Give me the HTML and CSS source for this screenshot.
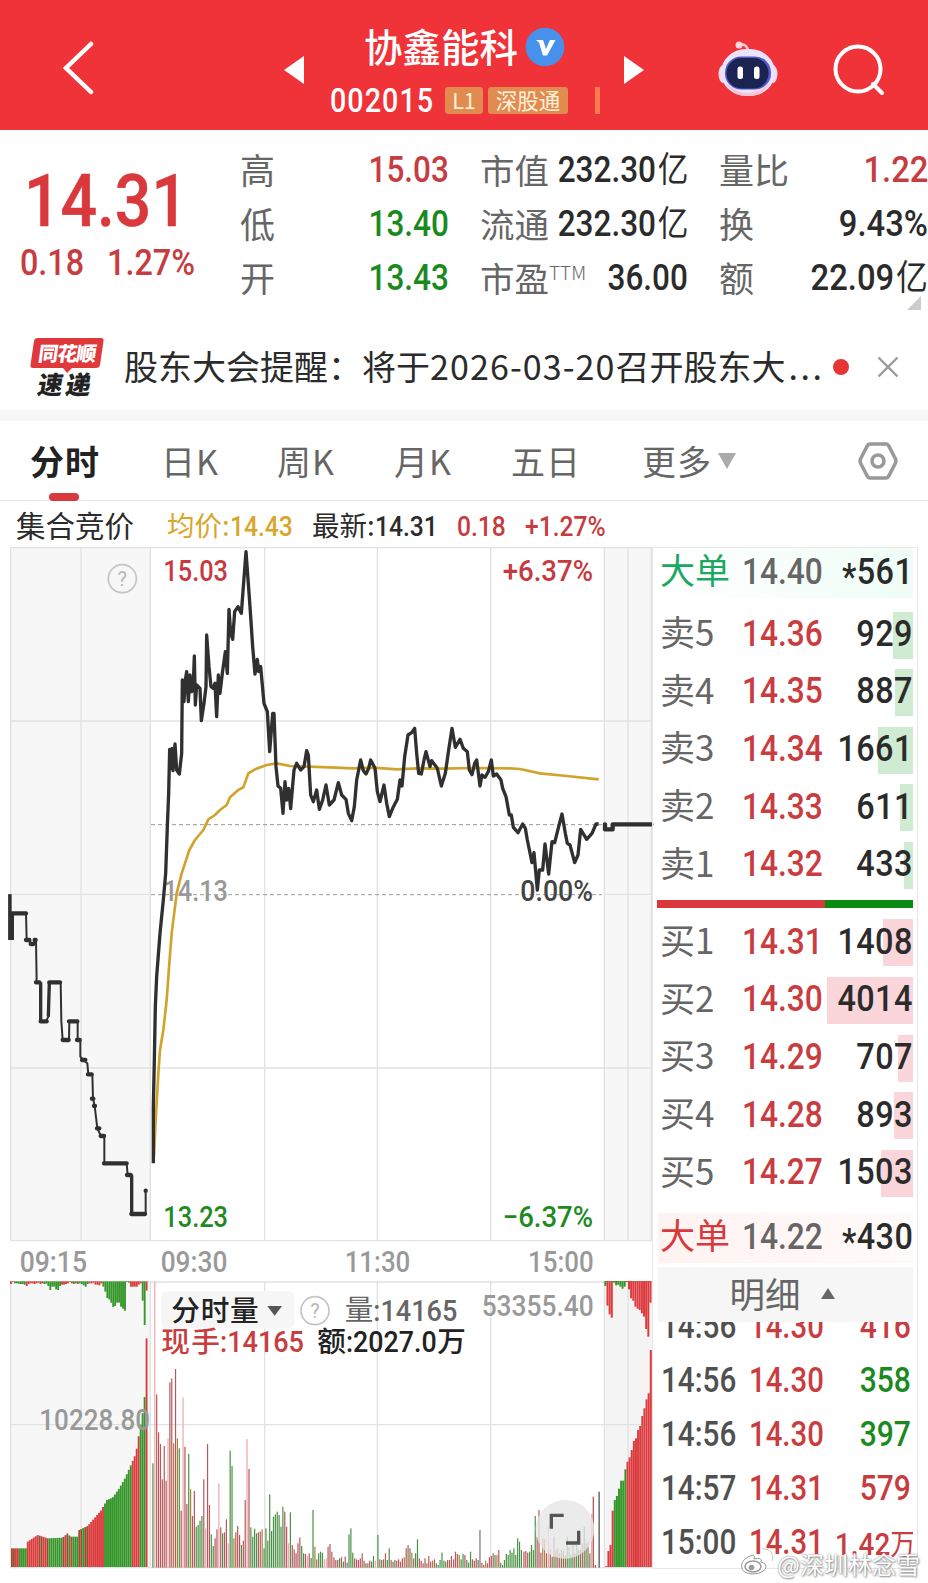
FILE: index.html
```html
<!DOCTYPE html>
<html lang="zh-CN">
<head>
  <meta charset="UTF-8">
  <meta name="viewport" content="width=device-width, initial-scale=1.0">
  <title>协鑫能科 002015</title>
  <link rel="stylesheet" href="styles.css">
</head>
<body>
  <header>
    <svg class="back" width="32" height="54" viewBox="0 0 32 54"><path d="M29 3 L4 27 L29 51"/></svg>
    <svg class="prev" width="20" height="28" viewBox="0 0 20 28"><path d="M20 0 V28 L0 14 Z"/></svg>
    <div class="stock">
      <div class="name">协鑫能科
        <svg width="40" height="40" viewBox="0 0 40 40"><circle cx="20" cy="20" r="19.3" fill="#4791ea"/><path d="M11 13 H18 L21 22 L25 13 H30.500 L22 28.500 H18 L14 15.500 Z" fill="#fff"/></svg>
      </div>
      <div class="code">
        <span class="code-num">002015</span>
        <span class="tag tag-l1">L1</span>
        <span class="tag">深股通</span>
        <span class="sliver"></span>
      </div>
    </div>
    <svg class="next" width="20" height="28" viewBox="0 0 20 28"><path d="M0 0 V28 L20 14 Z"/></svg>
    <svg class="robot" width="60" height="58" viewBox="0 0 60 58">
      <path d="M21 5 Q29 3 30 11" fill="none" stroke="#ffc9d3" stroke-width="2.500"/>
      <circle cx="21" cy="5" r="3.500" fill="#ffd9df"/>
      <ellipse cx="5" cy="34" rx="4.500" ry="9" fill="#f6d9ec"/>
      <ellipse cx="55" cy="34" rx="4.500" ry="9" fill="#f6d9ec"/>
      <rect x="3" y="9" width="54" height="47" rx="25" fill="#e9e4fb"/>
      <path d="M8 43 Q29 63 52 43 Q45 56 30 56 Q15 56 8 43" fill="#fbc4d6"/>
      <rect x="7" y="16.500" width="46" height="33" rx="16" fill="#5557c9"/>
      <rect x="8.500" y="18" width="42" height="30.500" rx="15" fill="#1b2450"/>
      <rect x="19.500" y="26.500" width="5.500" height="12.500" rx="2.500" fill="#fff"/>
      <rect x="36" y="26.500" width="5.500" height="12.500" rx="2.500" fill="#fff"/>
    </svg>
    <svg class="search" width="52" height="52" viewBox="0 0 52 52"><circle cx="25" cy="25" r="22.500"/><path d="M40 40 L49 49"/></svg>
  </header>

  <section class="quote">
    <div class="last">
      <div class="last-price">14.31</div>
      <div class="last-change"><span>0.18</span><span>1.27%</span></div>
    </div>
    <div class="stats">
      <div class="stat s1"><span>高</span><b class="red">15.03</b></div>
      <div class="stat s2"><span>市值</span><b>232.30<i>亿</i></b></div>
      <div class="stat s3"><span>量比</span><b class="red">1.22</b></div>
      <div class="stat s1"><span>低</span><b class="green">13.40</b></div>
      <div class="stat s2"><span>流通</span><b>232.30<i>亿</i></b></div>
      <div class="stat s3"><span>换</span><b>9.43%</b></div>
      <div class="stat s1"><span>开</span><b class="green">13.43</b></div>
      <div class="stat s2"><span>市盈<sup>TTM</sup></span><b>36.00</b></div>
      <div class="stat s3"><span>额</span><b>22.09<i>亿</i></b></div>
    </div>
    <div class="corner"></div>
  </section>

  <section class="news">
    <svg class="news-logo" width="74" height="62" viewBox="0 0 74 62">
      <path d="M8 1 H71 Q74 1 73.500 4 L70 28 Q69.500 31 66 31 H42 L37 36 L33 31 H3 Q0 31 .5 28 L4 4 Q4.500 1 8 1 Z" fill="#e0393c"/>
      <text x="37" y="24" text-anchor="middle" fill="#fff" font-size="20" textLength="58" transform="skewX(-8) translate(3 0)">同花顺</text>
      <text x="37" y="57" text-anchor="middle" fill="#222" font-size="25" textLength="53" transform="skewX(-10) translate(6 0)">速递</text>
    </svg>
    <div class="news-text">股东大会提醒：<span>将于</span><em>2026-03-20</em>召开股东大<span class="dots">...</span></div>
    <div class="dot"></div>
    <svg class="close" width="22" height="22" viewBox="0 0 22 22"><path d="M1.500 1.500 L20.500 20.500 M20.500 1.500 L1.500 20.500"/></svg>
  </section>

  <nav>
    <div class="tab active">分时</div>
    <div class="tab">日K</div>
    <div class="tab">周K</div>
    <div class="tab">月K</div>
    <div class="tab">五日</div>
    <div class="tab more">更多<svg width="18" height="16" viewBox="0 0 18 16"><path d="M0 0 H18 L9 16 Z" fill="#aaa"/></svg></div>
    <svg class="gear" width="40" height="38" viewBox="0 0 40 38"><path d="M12 2 H28 Q29.500 2 30.500 3.500 L37.500 17 Q38.300 19 37.500 21 L30.500 34.500 Q29.500 36 28 36 H12 Q10.500 36 9.500 34.500 L2.500 21 Q1.700 19 2.500 17 L9.500 3.500 Q10.500 2 12 2 Z"/><circle cx="20" cy="19" r="6"/></svg>
  </nav>

  <div class="info">
    <span class="auction">集合竞价</span>
    <span class="avg">均价:<b>14.43</b></span>
    <span class="new">最新:<b>14.31</b></span>
    <span class="red"><b>0.18</b></span>
    <span class="red"><b>+1.27%</b></span>
  </div>

  <main>
    <div class="charts">
      <svg class="price" width="652" height="728" viewBox="0 21 1956 2184">
        <rect x="31" y="22" width="420" height="2081" fill="#f7f7f7"/>
        <rect x="1813" y="22" width="143" height="2081" fill="#f7f7f7"/>
        <path class="grid" d="M31 23 H1956 M31 543 H1956 M31 1063 H451 M1813 1063 H1956 M31 1584 H1956 M31 2102 H1956
          M32 22 V2103 M243 22 V2103 M451 22 V2103 M794 22 V2103 M1132 22 V2103 M1472 22 V2103 M1813 22 V2103 M1884 22 V2103 M1954 22 V2103"/>
        <path class="dash" d="M453 854 H1806 M453 1064 H1806"/>
        <circle cx="367" cy="116" r="42" fill="none" stroke="#c4c4c4" stroke-width="5"/>
        <text x="367" y="138" text-anchor="middle" font-size="60" fill="#b8b8b8">?</text>
        <text x="490" y="1083" textLength="194" lengthAdjust="spacingAndGlyphs" fill="#999">14.13</text>
        <text x="1561" y="1083" textLength="218" lengthAdjust="spacingAndGlyphs" fill="#444">0.00%</text>
        <polyline class="avg-line" points="462,1850 466,1760 475,1600 480,1530 490,1470 500,1380 508,1270 515,1180 530,1060 545,1000 555,970 568,930 585,900 610,870 625,838 645,825 660,810 680,795 690,772 715,750 730,742 745,700 765,688 800,675 830,670 870,678 990,682 1060,685 1120,683 1190,688 1250,685 1330,686 1410,684 1530,685 1560,687 1620,700 1700,708 1796,718"/>
        <polyline class="line" points="460,1870 460,1700 463,1560 466,1400 470,1310 480,1180 490,1080 497,1000 502,860 506,760 509,628 514,685 516,625 519,692 525,612 530,690 538,702 545,640 547,420 552,485 556,420 560,395 565,485 570,405 575,455 580,430 583,348 586,495 590,435 600,445 604,542 612,490 618,440 620,285 627,380 633,440 640,445 645,430 650,530 655,405 660,460 667,400 676,335 682,400 687,208 692,280 698,298 704,215 714,200 724,220 738,35 750,200 758,320 765,402 772,358 776,395 782,380 792,490 802,515 809,635 818,520 822,520 828,680 834,738 842,745 849,820 855,725 860,780 866,745 872,806 882,690 890,670 902,690 912,680 920,632 925,645 932,765 940,785 950,750 958,808 968,780 978,735 988,795 1002,780 1015,728 1025,765 1038,778 1045,820 1055,842 1063,800 1070,720 1082,660 1090,692 1098,702 1106,685 1112,660 1125,685 1132,755 1140,785 1152,735 1160,790 1168,830 1178,805 1192,778 1200,720 1206,738 1214,650 1224,585 1235,578 1244,565 1250,640 1256,700 1264,702 1272,660 1278,635 1290,680 1295,662 1312,685 1324,738 1336,700 1346,630 1356,565 1366,622 1380,598 1390,625 1402,635 1408,690 1416,704 1424,670 1430,660 1440,738 1446,705 1455,712 1465,695 1474,660 1480,708 1490,702 1503,720 1508,745 1518,770 1528,825 1534,825 1540,862 1554,878 1568,852 1576,865 1582,900 1596,968 1602,938 1612,1050 1618,990 1628,990 1635,912 1646,1002 1656,905 1664,908 1676,860 1686,822 1696,880 1702,910 1710,915 1724,968 1734,945 1742,868 1760,898 1776,880 1788,852 1796,852"/>
        <path class="step" d="M1815 853 V868 H1838 V853 H1954"/>
        <g transform="translate(0 1020)">
          <path class="thin" d="M28 43 V180 M36 180 V100 H78 L80 180 H90 L92 192 H100 L108 180 L110 307 H120 L122 424 H138 L145 410 L148 307 H182 L184 424 L188 480 H207 L208 424 H233 V480 H241 V530 L250 540 L262 550 L265 583 H277 L279 656 L284 678 L292 745 L303 768 H313 V850 H380 L383 885 H394 L395 1002 H437 V932"/>
          <path class="step" d="M36 100 H78 M78 180 H88 M92 192 H100 M104 180 H107 M108 307 H118 M122 424 H140 M148 307 H180 M188 480 H206 M207 424 H232 M231 480 H239 M246 540 H256 M264 583 H275 M276 656 H280 M282 678 H285 M291 745 H298 M302 768 H312 M312 850 H380 M381 885 H392 M394 1002 H435 M437 932 H437.100"/>
          <path class="line" d="M30 43 V180 M37 100 V180 M122 307 V424 M148 307 L145 410 M395 885 V1002"/>
        </g>
        <g>
          <text x="490" y="124" textLength="194" lengthAdjust="spacingAndGlyphs" fill="#c63a3f">15.03</text>
          <text x="1508" y="124" textLength="271" lengthAdjust="spacingAndGlyphs" fill="#c63a3f">+6.37%</text>
          <text x="490" y="2060" textLength="194" lengthAdjust="spacingAndGlyphs" fill="#1f8a24">13.23</text>
          <text x="1508" y="2060" textLength="271" lengthAdjust="spacingAndGlyphs" fill="#1f8a24">−6.37%</text>
        </g>
        <g fill="#999">
          <text x="59" y="2196" textLength="202" lengthAdjust="spacingAndGlyphs">09:15</text>
          <text x="482" y="2196" textLength="200" lengthAdjust="spacingAndGlyphs">09:30</text>
          <text x="1034" y="2196" textLength="197" lengthAdjust="spacingAndGlyphs">11:30</text>
          <text x="1584" y="2196" textLength="197" lengthAdjust="spacingAndGlyphs">15:00</text>
        </g>
      </svg>

      <svg class="volume" width="652" height="300" viewBox="0 15 1956 900">
        <rect x="31" y="33" width="420" height="860" fill="#f7f7f7"/>
        <rect x="1813" y="33" width="143" height="860" fill="#f4f4f4"/>
        <path class="grid" d="M31 36 H1956 M31 464 H1956 M31 893 H1956 M32 33 V893 M243 33 V893 M451 33 V893 M794 33 V893 M1132 33 V893 M1472 33 V893 M1813 33 V893 M1884 33 V893"/>
        <g id="bars"></g>
        <rect x="483" y="63" width="400" height="112" rx="18" fill="#f6f6f6"/>
        <text class="cn mid" x="514" y="154" textLength="262" fill="#222">分时量</text>
        <path d="M802 108 H846 L824 137 Z" fill="#555"/>
        <circle cx="945" cy="122" r="42" fill="none" stroke="#c4c4c4" stroke-width="5"/>
        <text x="945" y="144" text-anchor="middle" font-size="60" fill="#b8b8b8">?</text>
        <text class="cn" x="1034" y="150" fill="#666">量</text>
        <text x="1120" y="152" textLength="252" lengthAdjust="spacingAndGlyphs" fill="#666">:14165</text>
        <text x="1445" y="137" textLength="336" lengthAdjust="spacingAndGlyphs" fill="#999">53355.40</text>
        <g class="bold">
          <text class="cn" x="484" y="247" textLength="176" fill="#c93c40">现手</text>
          <text x="660" y="247" textLength="252" lengthAdjust="spacingAndGlyphs" fill="#c93c40">:14165</text>
          <text class="cn" x="952" y="247" fill="#222">额</text>
          <text x="1038" y="247" textLength="272" lengthAdjust="spacingAndGlyphs" fill="#222">:2027.0</text>
          <text class="cn" x="1312" y="247" fill="#222">万</text>
        </g>
        <text x="118" y="481" textLength="332" lengthAdjust="spacingAndGlyphs" fill="#999">10228.80</text>
        <circle cx="1695" cy="778" r="88" fill="#e6e6e6" fill-opacity=".8"/>
        <path d="M1654 776 V736 H1691 M1736 782 V819 H1698" fill="none" stroke="#555" stroke-width="10"/>
      </svg>
    </div>

    <aside>
      <div class="row big sell-big"><span>大单</span><b>14.40</b><em><u>*</u>561</em></div>
      <div class="row sell"><span>卖5</span><b>14.36</b><em>929</em><i style="width:20px"></i></div>
      <div class="row sell"><span>卖4</span><b>14.35</b><em>887</em><i style="width:18px"></i></div>
      <div class="row sell"><span>卖3</span><b>14.34</b><em>1661</em><i style="width:35px"></i></div>
      <div class="row sell"><span>卖2</span><b>14.33</b><em>611</em><i style="width:13px"></i></div>
      <div class="row sell"><span>卖1</span><b>14.32</b><em>433</em><i style="width:9px"></i></div>
      <div class="ratio"></div>
      <div class="row buy"><span>买1</span><b>14.31</b><em>1408</em><i style="width:30px"></i></div>
      <div class="row buy"><span>买2</span><b>14.30</b><em>4014</em><i style="width:86px"></i></div>
      <div class="row buy"><span>买3</span><b>14.29</b><em>707</em><i style="width:15px"></i></div>
      <div class="row buy"><span>买4</span><b>14.28</b><em>893</em><i style="width:19px"></i></div>
      <div class="row buy"><span>买5</span><b>14.27</b><em>1503</em><i style="width:32px"></i></div>
      <div class="row big buy-big"><span>大单</span><b>14.22</b><em><u>*</u>430</em></div>
      <div class="detail">明细<svg width="14" height="11" viewBox="0 0 14 11"><path d="M0 11 H14 L7 0 Z" fill="#666"/></svg></div>
      <div class="ticks">
        <div class="tick"><span>14:56</span><b>14.30</b><em class="red">416</em></div>
        <div class="tick"><span>14:56</span><b>14.30</b><em class="green">358</em></div>
        <div class="tick"><span>14:56</span><b>14.30</b><em class="green">397</em></div>
        <div class="tick"><span>14:57</span><b>14.31</b><em class="red">579</em></div>
        <div class="tick"><span>15:00</span><b>14.31</b><em class="red wan">1.42<i>万</i></em></div>
      </div>
    </aside>
  </main>

  <div class="watermark">
    <svg width="34" height="28" viewBox="0 0 34 28">
      <path d="M13 7 Q2 10 1.500 18 Q2 26 13 26 Q26 25 26 18 Q25 14 21 14 Q23 9 14 11 Q15 7 13 7 Z" fill="#fff" stroke="#999" stroke-width="1"/>
      <ellipse cx="13" cy="18.500" rx="8" ry="5.500" fill="none" stroke="#999" stroke-width="1.500"/>
      <circle cx="11.500" cy="19.500" r="2.800" fill="#999"/>
      <path d="M22 2 Q33 2 31 13 M22 7 Q27 7 26.500 12" fill="none" stroke="#fff" stroke-width="2.500"/>
      <path d="M22 .7 Q34.500 1 32.500 13" fill="none" stroke="#bbb" stroke-width=".8"/>
    </svg>
    <span>@深圳林念雪</span>
  </div>

  <script src="chart.js"></script>
</body>
</html>
```

FILE: styles.css
```css
* {
  box-sizing: border-box;
}

body {
  margin: 0;
  position: relative;
  width: 928px;
  height: 1583px;
  overflow: hidden;
  background: #fff;
  color: #2b2b2b;
  font-family: Roboto, "Noto Sans CJK SC", sans-serif;
}

b, em, i {
  font-style: normal;
  font-weight: 500;
}

.red { color: #c63c40; }
.green { color: #1a8a1e; }

/* top bar */
header {
  display: flex;
  align-items: flex-start;
  height: 129.500px;
  background: #f03239;
}

header svg { flex: none; }

.back {
  margin: 41px 0 0 62px;
  fill: none;
  stroke: #fff;
  stroke-width: 4.5;
  stroke-linecap: round;
}

.prev, .next {
  margin-top: 56px;
  fill: #fff;
}

.prev { margin-left: 190px; }
.next { margin-left: 22px; }

.stock {
  width: 298px;
  padding: 19px 0 0 26px;
}

.name {
  display: flex;
  align-items: center;
  height: 52px;
  padding-left: 34px;
  font-family: "Noto Sans CJK SC", sans-serif;
  font-size: 38.5px;
  font-weight: 500;
  color: #fff;
  white-space: nowrap;
}

.name svg { margin: 4px 0 0 7px; }

.code {
  display: flex;
  align-items: center;
  height: 27px;
  margin-top: 16px;
  color: #fff;
}

.code-num {
  width: 115px;
  font-size: 33px;
  font-weight: 500;
  letter-spacing: 1.2px;
  transform: scaleX(.87);
  transform-origin: left;
}

.tag {
  height: 27px;
  line-height: 25px;
  width: 80px;
  margin-right: 27px;
  border-radius: 3px;
  background: #e28b50;
  font-family: "Noto Sans CJK SC", sans-serif;
  font-size: 21.5px;
  color: #fff2dc;
  text-align: center;
  white-space: nowrap;
  flex: none;
}

.tag-l1 {
  width: 38px;
  margin-right: 5px;
}

.sliver {
  width: 5px;
  height: 27px;
  background: #ff7a50;
  flex: none;
}

.robot { margin: 40px 0 0 74px; }

.search {
  margin: 44px 0 0 55px;
  fill: none;
  stroke: #fff;
  stroke-width: 4;
  stroke-linecap: round;
}

/* quote block */
.quote {
  position: relative;
  display: flex;
  height: 195.500px;
}

.last {
  width: 240px;
  padding: 28px 0 0 24px;
  color: #d9383c;
}

.last-price {
  font-size: 73px;
  line-height: 86px;
  font-weight: 500;
  -webkit-text-stroke: .6px;
  transform: scaleX(.88);
  transform-origin: left;
}

.last-change {
  display: flex;
  gap: 26px;
  margin: -1px 0 0 -4px;
  font-size: 36.5px;
  line-height: 40px;
  font-weight: 500;
  color: #c63c40;
  transform: scaleX(.885);
  transform-origin: left;
}

.stats {
  display: grid;
  grid-template-columns: 210px 238px 240px;
  grid-auto-rows: 54px;
  padding-top: 12px;
}

.stat {
  display: flex;
  justify-content: space-between;
  align-items: center;
  white-space: nowrap;
}

.s1 { padding-right: 1px; }
.s2 { padding-left: 30px; }
.s3 { padding-left: 31px; }

.stat span {
  font-family: "Noto Sans CJK SC", sans-serif;
  font-size: 35px;
  line-height: 50px;
  color: #666;
}

.s2 span { font-size: 34.5px; }

.stat sup {
  font-size: 19px;
  line-height: 0;
  vertical-align: 12px;
  font-weight: 300;
}

.stat b {
  font-size: 36px;
  line-height: 50px;
  padding-top: 3px;
  transform: scaleX(.875);
  transform-origin: right;
}

.s2 b { margin-left: -40px; }
.s3 b { transform: scaleX(.91); }

.stat b i {
  display: inline-block;
  margin-left: 2px;
  font-size: 35px;
  line-height: 40px;
  font-weight: 400;
}

.corner {
  position: absolute;
  right: 7px;
  bottom: 15px;
  border-left: 14px solid transparent;
  border-bottom: 14px solid #ccc;
}

/* news */
.news {
  display: flex;
  align-items: center;
  height: 96px;
  padding: 0 29px 0 30px;
  border-bottom: 11px solid #f7f7f7;
}

.news-logo {
  flex: none;
  overflow: visible;
  font-family: "Noto Sans CJK SC", sans-serif;
  font-weight: 900;
}

.news-text {
  width: 703px;
  margin: -4px 0 0 20px;
  font-family: "Noto Sans CJK SC", sans-serif;
  font-size: 34px;
  white-space: nowrap;
}

.news-text em {
  font-weight: 400;
  letter-spacing: 1.1px;
}

.dots {
  margin-left: 3px;
  letter-spacing: 2.500px;
}

.dot {
  width: 16px;
  height: 16px;
  margin: -2px 0 0 8px;
  border-radius: 50%;
  background: #e63333;
  flex: none;
}

.close {
  margin: -1px 0 0 28px;
  flex: none;
  stroke: #999;
  stroke-width: 2.4;
}

/* period tabs */
nav {
  display: flex;
  align-items: center;
  height: 80px;
  padding: 0 30px 0 30px;
  border-bottom: 1px solid #e6e6e6;
  font-family: "Noto Sans CJK SC", sans-serif;
  font-size: 34px;
  color: #666;
}

.tab {
  position: relative;
  flex: none;
  width: 116px;
  line-height: 50px;
  letter-spacing: 1px;
}

.tab.active {
  width: 131px;
  font-weight: 700;
  color: #222;
}

.tab.active::after {
  content: "";
  position: absolute;
  left: 19px;
  bottom: -15px;
  width: 30px;
  height: 8px;
  border-radius: 4px;
  background: #d9383c;
}

.tab:nth-child(3) { width: 117px; }
.tab:nth-child(4) { width: 117px; }
.tab:nth-child(5) { width: 131px; }

.more { width: 140px; }
.more svg { margin: 0 0 6px 6px; }

.gear {
  margin: 0 0 0 auto;
  fill: none;
  stroke: #999;
  stroke-width: 3.5;
}

/* line above the chart */
.info {
  display: flex;
  align-items: center;
  height: 46px;
  padding: 0 0 1px 16px;
  font-family: "Noto Sans CJK SC", sans-serif;
  font-size: 27.5px;
  white-space: nowrap;
}

.info b {
  display: inline-block;
  font-family: Roboto, sans-serif;
  font-size: 28px;
  transform: scaleX(.88);
  transform-origin: left;
}

.info .auction {
  width: 151px;
  font-size: 29.5px;
}

.info .avg {
  width: 145px;
  color: #d9a52a;
}

.info .new { width: 145px; }
.info .red { width: 68px; }

/* charts */
main {
  display: flex;
}

.charts { width: 652px; }

.charts svg {
  display: block;
  overflow: visible;
}

.charts text {
  font-family: Roboto, sans-serif;
  font-size: 86px;
  font-weight: 500;
}

.charts text[font-size="60"] {
  font-size: 60px;
  font-weight: 400;
}

.charts .cn {
  font-family: "Noto Sans CJK SC", sans-serif;
  font-weight: 400;
}

.charts .mid,
.charts .bold .cn { font-weight: 500; }

.grid {
  fill: none;
  stroke: #e2e2e2;
  stroke-width: 4;
}

.dash {
  fill: none;
  stroke: #999;
  stroke-width: 3;
  stroke-dasharray: 12 9;
}

.line, .thin, .step, .avg-line {
  fill: none;
  stroke: #303030;
  stroke-width: 10;
  stroke-linejoin: round;
}

.thin { stroke-width: 6; }

.step {
  stroke-width: 13;
  stroke-linecap: round;
}

.avg-line {
  stroke: #d0a32c;
  stroke-width: 8;
}

/* order book */
aside {
  width: 266px;
  height: 1022px;
  padding: 0 4px 0 5px;
  border: 1px solid #e8e8e8;
}

.row {
  position: relative;
  display: flex;
  align-items: center;
  height: 57.6px;
  padding: 0 0 3px 2px;
  white-space: nowrap;
}

.row span {
  flex: none;
  width: 82px;
  margin-top: -5px;
  font-family: "Noto Sans CJK SC", sans-serif;
  font-size: 35px;
  line-height: 44px;
  color: #666;
}

.row b {
  flex: none;
  width: 80px;
  font-size: 36px;
  color: #c93c40;
  transform: scaleX(.88);
  transform-origin: left;
}

.row em {
  position: relative;
  z-index: 1;
  margin-left: auto;
  font-size: 36px;
  letter-spacing: .5px;
  transform: scaleX(.9);
  transform-origin: right;
}

.row u {
  text-decoration: none;
  vertical-align: -5px;
  line-height: 0;
}

.row i {
  position: absolute;
  right: 0;
  top: 5px;
  height: 47px;
  background: #cfebd1;
}

.buy i { background: #fad5d9; }

.big { height: 50px; }
.big b { color: #666; }

.sell-big {
  margin-bottom: 8.500px;
  background: linear-gradient(90deg, #fff, #effdf6);
}

.sell-big span { color: #1ba862; }

.buy-big {
  margin-top: 11px;
  background: linear-gradient(90deg, #fff3f1, #fffafa);
}

.buy-big span { color: #d9383c; }

.ratio {
  height: 7.500px;
  margin: 6px 0 6.500px -1px;
  background: linear-gradient(90deg, #d9383c 65.500%, #0a8a12 65.500%);
}

.detail {
  display: flex;
  align-items: center;
  justify-content: center;
  height: 55px;
  margin-top: 4px;
  padding: 0 7px 4px 0;
  background: #f6f6f6;
  font-family: "Noto Sans CJK SC", sans-serif;
  font-size: 35.5px;
  color: #666;
}

.detail svg { margin: 1px 0 0 20px; }

.ticks {
  height: 245px;
  overflow: hidden;
}

.ticks .tick:first-child { margin-top: -23px; }

.tick {
  display: flex;
  align-items: center;
  height: 54px;
  padding: 0 2px 0 3px;
  font-size: 34.5px;
  font-weight: 500;
  white-space: nowrap;
}

.tick span {
  flex: none;
  width: 88px;
  color: #505050;
  transform: scaleX(.86);
  transform-origin: left;
}

.tick b {
  flex: none;
  width: 74px;
  color: #c93c40;
  transform: scaleX(.85);
  transform-origin: left;
}

.tick em {
  margin-left: auto;
  transform: scaleX(.87);
  transform-origin: right;
}

.tick .wan {
  font-size: 32px;
}

.tick .wan i {
  font-size: 29px;
  font-weight: 400;
}

.watermark {
  position: absolute;
  right: 8px;
  bottom: 1px;
  display: flex;
  align-items: center;
  height: 38px;
  font-family: "Noto Sans CJK SC", sans-serif;
  font-size: 24px;
  color: #fff;
  text-shadow: 0 0 2px #777, 1px 1px 2px #999;
}

.watermark svg { margin: -2px 3px 0 0; }
```

FILE: chart.js
```js
const bars = document.getElementById('bars');
const colors = { r: '#b5595c', g: '#4a9146', o: '#a8823f', p: '#eda9ac', k: '#777', R: '#dc3a3c', G: '#35962a', B: '#9a5030' };

function bar(x, y1, y2, w, c) {
  const rect = document.createElementNS('http://www.w3.org/2000/svg', 'rect');
  rect.setAttribute('x', x);
  rect.setAttribute('y', y1);
  rect.setAttribute('width', w);
  rect.setAttribute('height', y2 - y1);
  rect.setAttribute('fill', colors[c]);
  bars.appendChild(rect);
}

// minute volume, one group per stretch of the session: colour + top of the bar
const minutes = [
  [457, 'g580 p35 r373 r487 r522 r628 r528 r632 p505 r337 r325 o520 r297 o505 g535 r722 p382 r530 r702 g552 o658 r738 r663 g770 g765 g752 g738 r628 p775 r522 r705 g793 g828 r805 r778 p640 r772 g790 r787 r748 p820 g542 g588 o805 r787 r768 r795 g825 r812 r690 p507 r597 g772 g800 g776 g790 r787 r785 o778 g835'],
  [796, 'g775 g812 g673 g783 g740 g733 g725 g735 g770 g710 r725 r770 p820 g727 r825 r838 r850 r820 r803 g828 g850 r852 p858 r850 g864 g720 o830 r868 g850 g845 g848 p868 p865 r830 r822 r845'],
  [1000, 'r862 r870 r870 g865 r862 g875 r860 g878 g793 g775 g848 r865 r868 r870 r865 r850 r872 g880 r880 r872 g875 g858 p872'],
  [1132, 'g795 r868 g870 r868 r850 g870 g835 r870 r875 g870 r872 r868 r875 r865 o862 r835 r825 g835 o848 r865 g850 g808 r865 r872 r880 r865 r880 r858 r875 o872 r868 g880 g885 g870 g848 g872 g875 r870 r870 r858'],
  [1359, 'r868 r845 r852 o855 g868 g852 r855 g870 g878 g845 r868 r872 r865 g870 k780 r878 r885 o872 r880 r862 r858 r850 g855 o855 r840 g878 g885 g870 g852 g855 g840 g848 g835 g855 g805 g815 g840'],
  [1570, 'r845 r843 r848 g845 g825 g840 g738 r800 r720 r848 o805 o808 r850 p770 r838 g860 r800 g840 r835 r850 g840 r842 r855 g800 g832 g855 g820 r850 g825 g838 r840 r820 g770 g820 r815 g850']
];
minutes.forEach(([start, list]) => {
  list.split(' ').forEach((m, i) => bar(start + i * 5.65, +m.slice(1), 893, 3.6, m[0]));
});
bar(1773, 732, 893, 4, 'p');
bar(1778, 680, 893, 4, 'r');
bar(1784, 885, 893, 4, 'r');
bar(1795, 665, 893, 5, 'k');

// opening auction
const open = [[33, 835], [76, 835], [80, 815], [110, 795], [140, 805], [185, 803], [200, 790], [208, 800], [230, 800], [235, 780], [260, 768], [280, 745], [300, 722], [318, 690], [335, 683], [355, 655], [372, 625], [390, 585], [405, 550], [415, 487], [425, 430], [432, 373], [440, 205]];
const openColors = 'BBRRGGGGRRRRRRBBRRBGGGGGGGBRBGRGGGBBGBBRRRRRRRRGGGGGGGGGGGGGGRRRRGGGR';
for (let i = 0; i < openColors.length; i++) {
  const x = 33 + i * 5.94;
  const n = Math.max(1, open.findIndex(p => p[0] >= x));
  const a = open[n - 1], b = open[n];
  const y = a[1] + (b[1] - a[1]) * (x - a[0]) / (b[0] - a[0]);
  bar(x, i === openColors.length - 1 ? 205 : y, 891, 5.6, openColors[i]);
}
const openTop = 'R42 R36 G40 G40 G41 G42 G42 G44 R48 R42 R40 R40 R42 R40 G38 R42 R40 G42 G41 G48 G60 G50 G50 G58 G60 G48 R44 R44 R42 R40 G36 R40 G42 G40 R42 G40 G42 G46 G50 G42 R40 R40 R38 R44 R44 R46 R40 G50 G65 G84 G88 G98 G111 G108 G98 G98 G110 G116 G122 G36 G38 R50 R50 R50 R50 R44 R40 G92 G165 R62';
openTop.split(' ').forEach((m, i) => bar(30 + i * 5.9, 34, +m.slice(1), 5.6, m[0]));

// closing auction
const close = 'R888 R843 R825 R722 G690 G678 G656 G632 G632 G598 R575 R562 R540 R513 R505 R480 R468 R438 R415 R388 R370 R240';
const closeTop = 'G48 R107 R133 R143 G38 G46 G44 G50 G56 G50 R36 R58 R85 R92 R110 R116 R120 R130 R140 R177 R200 R98';
close.split(' ').forEach((m, i) => bar(1816 + i * 6.35, +m.slice(1), 891, 6, m[0]));
closeTop.split(' ').forEach((m, i) => bar(1813 + i * 6.45, 33, +m.slice(1), 6, m[0]));
```
